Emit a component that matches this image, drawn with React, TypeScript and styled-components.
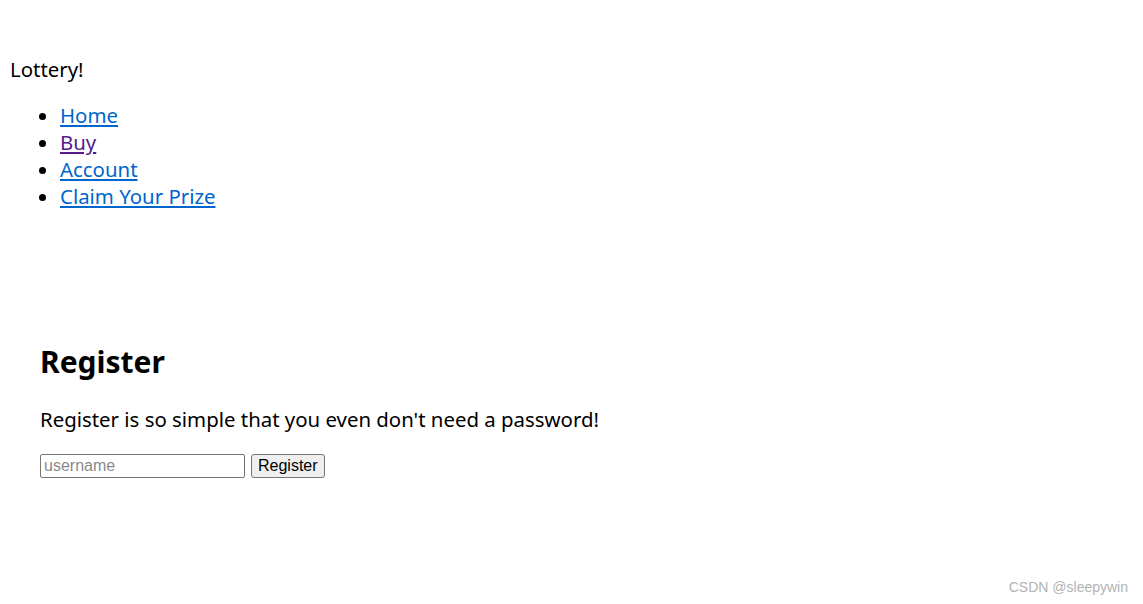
import styled, { createGlobalStyle } from 'styled-components';

const GlobalStyle = createGlobalStyle`
  html, body {
    margin: 0;
    padding: 0;
    background: #ffffff;
  }
  body {
    font-family: 'Noto Sans', 'Open Sans', sans-serif;
    color: #000;
  }
`;

const Page = styled.div`
  position: relative;
  width: 1143px;
  height: 604px;
  overflow: hidden;
`;

const Header = styled.header`
  padding: 56px 0 0 10px;
`;

const Brand = styled.div`
  font-size: 20.4px;
  line-height: 27px;
`;

const NavList = styled.ul`
  margin: 19px 0 0;
  padding-left: 50px;
  font-size: 20.4px;
  line-height: 27px;
`;

const NavLink = styled.a<{ $visited?: boolean }>`
  color: ${(p) => (p.$visited ? '#551a8b' : '#0066cc')};
  text-decoration: underline;
  text-underline-offset: 2px;
`;

const Main = styled.main`
  padding: 131px 0 0 40px;
`;

const Title = styled.h2`
  margin: 0;
  font-size: 30px;
  line-height: 41px;
  font-weight: 700;
`;

const Lead = styled.p`
  margin: 24px 0 0;
  font-size: 20.4px;
  line-height: 27px;
`;

const Form = styled.form`
  display: flex;
  gap: 6px;
  margin-top: 21px;
  align-items: center;
`;

const Input = styled.input`
  box-sizing: border-box;
  width: 205px;
  height: 24px;
  padding: 1px 3px;
  border: 1px solid #767676;
  border-radius: 2px;
  font-family: 'Liberation Sans', Arial, sans-serif;
  font-size: 16px;
  &::placeholder {
    color: #8a8a8a;
  }
`;

const Button = styled.button`
  box-sizing: border-box;
  height: 24px;
  padding: 0 6px;
  background: #efefef;
  border: 1px solid #767676;
  border-radius: 3px;
  font-family: 'Liberation Sans', Arial, sans-serif;
  font-size: 16px;
  color: #000;
`;

const Watermark = styled.div`
  position: absolute;
  right: 15px;
  bottom: 9px;
  font-family: 'Liberation Sans', Arial, sans-serif;
  font-size: 14px;
  color: #b3b3b3;
`;

const links = [
  { label: 'Home', visited: false },
  { label: 'Buy', visited: true },
  { label: 'Account', visited: false },
  { label: 'Claim Your Prize', visited: false },
];

export default function App() {
  return (
    <Page>
      <GlobalStyle />
      <Header>
        <Brand>Lottery!</Brand>
        <NavList>
          {links.map((l) => (
            <li key={l.label}>
              <NavLink href='#' $visited={l.visited}>
                {l.label}
              </NavLink>
            </li>
          ))}
        </NavList>
      </Header>

      <Main>
        <Title>Register</Title>
        <Lead>Register is so simple that you even don't need a password!</Lead>
        <Form onSubmit={(e) => e.preventDefault()}>
          <Input placeholder='username' />
          <Button type='submit'>Register</Button>
        </Form>
      </Main>

      <Watermark>CSDN @sleepywin</Watermark>
    </Page>
  );
}
